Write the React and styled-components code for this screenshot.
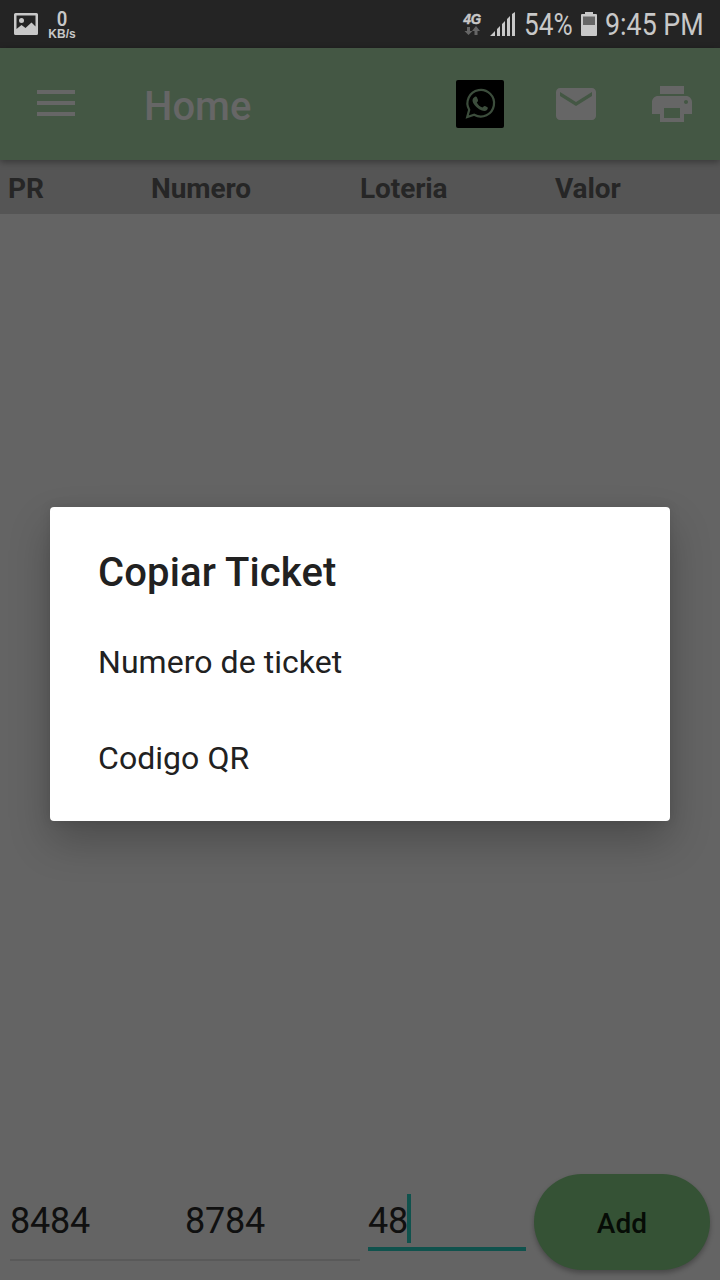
import React from "react";
import styled, { createGlobalStyle } from "styled-components";

const Global = createGlobalStyle`
  * { box-sizing: border-box; }
  body { margin: 0; background: #646464; font-family: Roboto, "Liberation Sans", sans-serif; }
`;

const Screen = styled.div`
  position: relative;
  display: flex;
  flex-direction: column;
  width: 720px;
  height: 1280px;
  overflow: hidden;
  background: #646464;
`;

const StatusBar = styled.header`
  display: flex;
  justify-content: space-between;
  flex: none;
  height: 48px;
  padding: 0 16px 0 14px;
  background: #242424;
  color: #c8c8c8;
`;

const StatusGroup = styled.div`
  display: flex;
  align-items: center;
`;

const StatusSvg = styled.svg`
  flex: none;
  display: block;
  margin-left: ${({ $gap }) => $gap || 0}px;
`;

const Speed = styled.div`
  display: flex;
  flex-direction: column;
  align-items: center;
  width: 30px;
  margin-left: 9px;
  padding-top: 2px;
`;

const SpeedValue = styled.span`
  font-size: 21px;
  line-height: 17px;
  font-weight: 600;
  transform: scaleX(0.88);
`;

const SpeedUnit = styled.span`
  font-family: "Liberation Sans", sans-serif;
  font-weight: 700;
  font-size: 12px;
  line-height: 12px;
`;

const Network = styled.div`
  display: flex;
  flex-direction: column;
  align-items: center;
  width: 20px;
`;

const NetworkLabel = styled.span`
  font: italic 700 14px/14px "Liberation Sans", sans-serif;
  -webkit-text-stroke: 0.5px currentColor;
  transform: scaleX(0.95);
`;

const CondensedBox = styled.span`
  width: ${({ $width }) => $width}px;
  margin-left: ${({ $gap }) => $gap}px;
  white-space: nowrap;
`;

const Condensed = styled.span`
  display: inline-block;
  font-size: 31px;
  line-height: 48px;
  transform: translateY(1px) scaleX(${({ $scale }) => $scale});
  transform-origin: 0 50%;
`;

const Toolbar = styled.nav`
  position: relative;
  display: flex;
  align-items: center;
  flex: none;
  height: 112px;
  padding: 0 24px 0 37px;
  background: #445744;
  color: #666;
  box-shadow: 0 2px 7px rgba(0, 0, 0, 0.36);
`;

const MenuButton = styled.div`
  display: flex;
  flex-direction: column;
  gap: 7px;
  width: 38px;
  margin-top: -2px;
`;

const MenuLine = styled.span`
  height: 4px;
  background: currentColor;
`;

const ToolbarTitle = styled.h1`
  flex: 1;
  margin: 6px 0 0 69px;
  font-size: 40px;
  line-height: 48px;
  font-weight: 500;
`;

const Actions = styled.div`
  display: flex;
  align-items: center;
  gap: 48px;
`;

const ActionIcon = styled.svg`
  display: block;
  width: 48px;
  height: 48px;
  fill: currentColor;
`;

const TableHead = styled.div`
  display: grid;
  grid-template-columns: 143px 209px 195px 1fr;
  flex: none;
  height: 54px;
  padding-left: 8px;
  background: #555;
`;

const HeadCell = styled.span`
  color: #262626;
  font-size: 28px;
  line-height: 57px;
  font-weight: 700;
  letter-spacing: -0.1px;
`;

const TicketList = styled.main`
  flex: 1;
`;

const EntryBar = styled.form`
  display: flex;
  flex: none;
  height: 112px;
  padding: 6px 10px 10px;
`;

const Field = styled.div`
  display: flex;
  align-items: center;
  width: ${({ $width }) => $width}px;
  height: ${({ $active }) => ($active ? 77 : 87)}px;
  margin-right: ${({ $active }) => ($active ? 8 : 0)}px;
  margin-left: ${({ $active }) => ($active ? 8 : 0)}px;
  padding-top: ${({ $active }) => ($active ? 20 : 8)}px;
  border-bottom: ${({ $active }) => ($active ? "4px solid #10524d" : "2px solid #595959")};
  color: #101010;
  font-size: 36px;
  line-height: 50px;
  letter-spacing: -0.2px;
`;

const Caret = styled.span`
  width: 4px;
  height: 49px;
  margin: -4px 0 0 -1px;
  background: #10524d;
`;

const AddButton = styled.div`
  display: flex;
  align-items: center;
  justify-content: center;
  width: 176px;
  height: 96px;
  padding-top: 2px;
  border-radius: 48px;
  background: #355235;
  color: #060c06;
  font-size: 28px;
  font-weight: 500;
  letter-spacing: 0.2px;
  box-shadow: 0 3px 5px rgba(0, 0, 0, 0.28);
`;

const Dialog = styled.section`
  position: absolute;
  top: 507px;
  left: 50px;
  width: 620px;
  height: 314px;
  padding: 40px 48px 0;
  border-radius: 4px;
  background: #fff;
  color: #212121;
  box-shadow: 0 20px 42px rgba(0, 0, 0, 0.24), 0 0 12px rgba(0, 0, 0, 0.1);
`;

const DialogTitle = styled.h2`
  margin: 0 0 12px;
  font-size: 40px;
  line-height: 52px;
  font-weight: 500;
  letter-spacing: 0.12px;
`;

const DialogOption = styled.div`
  height: 96px;
  font-size: 32px;
  line-height: 102px;
  letter-spacing: 0.05px;
`;

export default function App() {
  return (
    <Screen>
      <Global />
      <StatusBar>
        <StatusGroup>
          <StatusSvg width="24" height="48" viewBox="0 0 24 48" fill="currentColor">
            <path fillRule="evenodd" d="M1.500 13h21q1.500 0 1.500 1.500v19q0 1.500-1.500 1.500h-21q-1.500 0-1.500-1.500v-19q0-1.500 1.500-1.500zM2.500 15.500v13.500l5-4 4 3 6-5.500 4 4v-11z" />
            <circle cx="7.500" cy="20.500" r="2.500" />
          </StatusSvg>
          <Speed>
            <SpeedValue>0</SpeedValue>
            <SpeedUnit>KB/s</SpeedUnit>
          </Speed>
        </StatusGroup>
        <StatusGroup>
          <Network>
            <NetworkLabel>4G</NetworkLabel>
            <StatusSvg width="16" height="10" viewBox="0 0 16 10" fill="#666">
              <path d="M3 1h3v4h2.500L4.500 9 .5 5H3zM10.500 9h3V5h2.500L12 0 8 5h2.500z" />
            </StatusSvg>
          </Network>
          <StatusSvg $gap={8} width="25" height="48" viewBox="0 0 25 48" fill="currentColor">
            <path d="M0 36l5-5v5zM7 29l3-3v10H7zM12 24l3-3v15h-3zM17 19l3-3v20h-3zM22 14l3-2v24h-3z" />
          </StatusSvg>
          <CondensedBox $width={49} $gap={9}><Condensed $scale={0.845}>54%</Condensed></CondensedBox>
          <StatusSvg $gap={8} width="16" height="48" viewBox="0 0 16 48">
            <path fill="currentColor" d="M4 12h8v2h3q1 0 1 1v20q0 1-1 1H1q-1 0-1-1V15q0-1 1-1h3z" />
            <path fill="#666" d="M2 16.500h12V25H2z" />
          </StatusSvg>
          <CondensedBox $width={99} $gap={8}><Condensed $scale={0.865}>9:45 PM</Condensed></CondensedBox>
        </StatusGroup>
      </StatusBar>
      <Toolbar>
        <MenuButton><MenuLine /><MenuLine /><MenuLine /></MenuButton>
        <ToolbarTitle>Home</ToolbarTitle>
        <Actions>
          <ActionIcon viewBox="0 0 48 48">
            <rect width="48" height="48" rx="2" fill="#000" />
            <path d="M11.200 37l2-7.200a13.300 13.300 0 1 1 5 5z" fill="none" stroke="#3c4d3c" strokeWidth="2.200" />
            <path d="M18 17.500q2-2 3 0l1 2.500q.5 1-1.200 2.500 2 4 5.700 5 1.500-2 2.500-1.500l2.500 1.300q1 .7-.5 2.700-2 1.700-5 .5-6-2.300-8.800-7.500-1.700-3.500.8-5.500z" fill="#3c4d3c" />
          </ActionIcon>
          <ActionIcon viewBox="0 0 24 24">
            <path d="M20 4H4c-1.100 0-1.990.9-1.990 2L2 18c0 1.100.9 2 2 2h16c1.100 0 2-.9 2-2V6c0-1.100-.9-2-2-2zm0 4l-8 5-8-5V6l8 5 8-5v2z" />
          </ActionIcon>
          <ActionIcon viewBox="0 0 24 24">
            <path d="M19 8H5c-1.660 0-3 1.340-3 3v6h4v4h12v-4h4v-6c0-1.660-1.340-3-3-3zm-3 11H8v-5h8v5zm3-7c-.55 0-1-.45-1-1s.45-1 1-1 1 .45 1 1-.45 1-1 1zm-1-9H6v4h12V3z" />
          </ActionIcon>
        </Actions>
      </Toolbar>
      <TableHead>
        {["PR", "Numero", "Loteria", "Valor"].map((name) => <HeadCell key={name}>{name}</HeadCell>)}
      </TableHead>
      <TicketList />
      <EntryBar>
        <Field $width={175}>8484</Field>
        <Field $width={175}>8784</Field>
        <Field $width={158} $active>48<Caret /></Field>
        <AddButton>Add</AddButton>
      </EntryBar>
      <Dialog>
        <DialogTitle>Copiar Ticket</DialogTitle>
        <DialogOption>Numero de ticket</DialogOption>
        <DialogOption>Codigo QR</DialogOption>
      </Dialog>
    </Screen>
  );
}
